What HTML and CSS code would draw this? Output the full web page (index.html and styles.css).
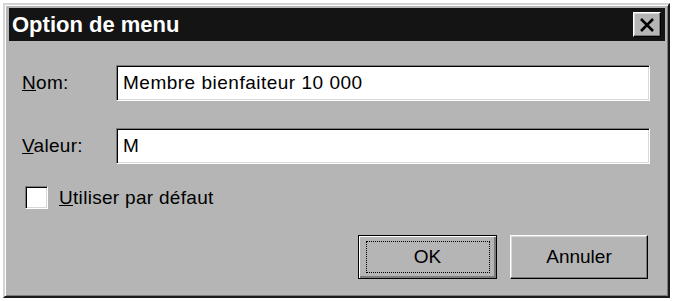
FILE: index.html
```html
<!DOCTYPE html>
<html lang="fr">
<head>
<meta charset="utf-8">
<title>Option de menu</title>
<link rel="stylesheet" href="styles.css">
</head>
<body>
<div class="window">
  <div class="titlebar">
    <span class="title">Option de menu</span>
    <span class="close">
      <svg width="16" height="14" viewBox="0 0 16 14"><path d="M2 1 L14 13 M14 1 L2 13" stroke="#000" stroke-width="2.6" fill="none"/></svg>
    </span>
  </div>
  <div class="content">
    <div class="row row-nom">
      <span class="label"><u>N</u>om:</span>
      <div class="field">Membre bienfaiteur 10 000</div>
    </div>
    <div class="row row-val">
      <span class="label"><u>V</u>aleur:</span>
      <div class="field">M</div>
    </div>
    <div class="check-row">
      <span class="checkbox"></span>
      <span class="check-label"><u>U</u>tiliser par défaut</span>
    </div>
    <div class="buttons">
      <div class="btn btn-default"><span class="focus">OK</span></div>
      <div class="btn"><span class="btn-text">Annuler</span></div>
    </div>
  </div>
</div>
</body>
</html>
```
FILE: styles.css
```css
html, body {
  margin: 0;
  padding: 0;
  background: #ffffff;
}
body {
  padding: 3px 0 0 3px;
  font-family: "Liberation Sans", Arial, sans-serif;
  font-size: 19px;
  color: #000;
}
.window {
  width: 667px;
  height: 295px;
  box-sizing: border-box;
  background: #b5b5b5;
  border: 2px solid;
  border-color: #d4d4d4 #1a1a1a #1a1a1a #d4d4d4;
  box-shadow: inset 1px 1px #ffffff, inset -1px -1px #7b7b7b;
  padding: 3px;
  display: flex;
  flex-direction: column;
}
.titlebar {
  height: 33px;
  background: #141414;
  display: flex;
  align-items: center;
  justify-content: space-between;
  padding: 0 4px 0 3px;
  margin-left: 1px;
}
.title {
  color: #ffffff;
  font-weight: bold;
  font-size: 22px;
  letter-spacing: 0px;
}
.close {
  width: 28px;
  height: 25px;
  box-sizing: border-box;
  background: #b5b5b5;
  border: 1px solid;
  border-color: #ffffff #000 #000 #ffffff;
  box-shadow: inset -1px -1px #7b7b7b, inset 1px 1px #d8d8d8;
  display: flex;
  align-items: center;
  justify-content: center;
  padding-top: 1px;
}
.content {
  padding: 24px 15px 0 14px;
  display: flex;
  flex-direction: column;
}
.row {
  display: flex;
  align-items: center;
}
.row-val {
  margin-top: 27px;
}
.label {
  width: 94px;
  flex: none;
  letter-spacing: 0.3px;
}
.field {
  flex: 1;
  height: 36px;
  box-sizing: border-box;
  background: #ffffff;
  border: 1px solid;
  border-color: #7b7b7b #ffffff #ffffff #7b7b7b;
  box-shadow: inset 1px 1px #000, inset -1px -1px #d8d8d8;
  padding: 0 6px;
  display: flex;
  align-items: center;
  letter-spacing: 0.5px;
}
.check-row {
  display: flex;
  align-items: center;
  margin-top: 22px;
  padding-left: 3px;
}
.checkbox {
  width: 23px;
  height: 23px;
  box-sizing: border-box;
  background: #ffffff;
  border: 1px solid;
  border-color: #7b7b7b #ffffff #ffffff #7b7b7b;
  box-shadow: inset 1px 1px #000, inset -1px -1px #d8d8d8;
  margin-right: 11px;
}
.check-label {
  letter-spacing: 0.3px;
}
.buttons {
  display: flex;
  justify-content: flex-end;
  gap: 13px;
  margin-top: 26px;
  padding-right: 2px;
}
.btn {
  width: 138px;
  height: 44px;
  box-sizing: border-box;
  background: #b5b5b5;
  border: 1px solid;
  border-color: #ffffff #000 #000 #ffffff;
  box-shadow: inset -1px -1px #7b7b7b, inset 1px 1px #d8d8d8;
  display: flex;
  align-items: center;
  justify-content: center;
}
.btn-default {
  width: 139px;
  border: 1px solid #000;
  box-shadow: inset 1px 1px #ffffff, inset -2px -2px #7b7b7b;
}
.focus {
  width: 124px;
  height: 32px;
  box-sizing: border-box;
  border: 1px dotted #000;
  display: flex;
  align-items: center;
  justify-content: center;
}
```
